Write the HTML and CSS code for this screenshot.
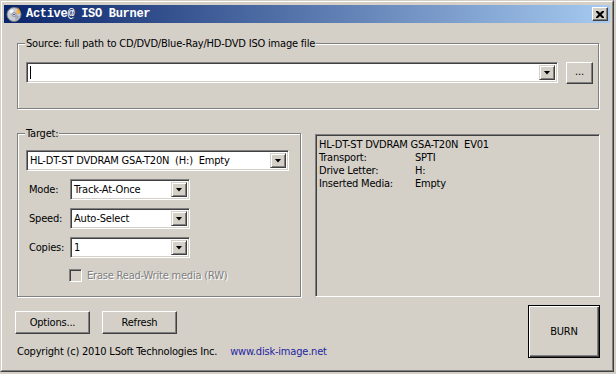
FILE: index.html
```html
<!DOCTYPE html>
<html>
	<head>
		<meta charset="utf-8" />
		<title>Active@ ISO Burner</title>
		<link rel="stylesheet" href="styles.css">
	</head>
	<body>
		<div class="window">
			<div class="frame">
				<!-- 标题栏 -->
				<div class="titlebar">
					<svg class="app-icon" width="16" height="16" viewBox="0 0 16 16">
						<circle cx="8" cy="8.5" r="7" fill="#c9ccd2" stroke="#7a7e88" stroke-width="1" />
						<path d="M3 6 A6 6 0 0 1 7 3 L7.6 6.4 A2.2 2.2 0 0 0 6 7.6 Z" fill="#f4f6fa" />
						<path d="M9.5 14 A6 6 0 0 0 13.6 10 L10.2 9.2 A2.2 2.2 0 0 1 9 10.6 Z" fill="#9fa6b4" />
						<circle cx="8" cy="8.5" r="2" fill="#e8e8ec" stroke="#7a7e88" stroke-width="0.8" />
						<circle cx="8" cy="8.5" r="0.8" fill="#0a246a" />
						<path d="M11 1 C13 2.5 14.5 4 13.8 6.5 C13.2 8 11.5 8.2 10.8 7.2 C10 6 10.8 5 11.4 4.2 C12 3.4 11.6 2.2 11 1 Z" fill="#f29a1e" />
						<path d="M11.8 4 C12.6 5 12.8 6 12.2 6.8 C11.7 7.2 11.2 6.8 11.3 6.2 C11.4 5.5 11.9 5 11.8 4 Z" fill="#ffe06a" />
					</svg>
					<span class="title">Active@ ISO Burner</span>
					<span class="close">
						<svg width="8" height="7" viewBox="0 0 8 7">
							<path d="M0 0h2l2 2 2-2h2v1l-2.5 2.5 2.5 2.5v1h-2l-2-2-2 2h-2v-1l2.5-2.5-2.5-2.5z" fill="#000" />
						</svg>
					</span>
				</div>

				<div class="client">
					<!-- 源文件 -->
					<div class="group source">
						<span class="caption">Source: full path to CD/DVD/Blue-Ray/HD-DVD ISO image file</span>
						<div class="source-row">
							<div class="combo combo-path">
								<span class="value"><i class="caret"></i></span>
								<span class="drop"><i class="arrow"></i></span>
							</div>
							<button class="btn btn-browse">...</button>
						</div>
					</div>

					<div class="middle">
						<!-- 目标设备 -->
						<div class="group target">
							<span class="caption">Target:</span>
							<div class="combo combo-drive">
								<span class="value">HL-DT-ST DVDRAM GSA-T20N&nbsp; (H:)&nbsp; Empty</span>
								<span class="drop"><i class="arrow"></i></span>
							</div>
							<div class="field">
								<span class="label">Mode:</span>
								<div class="combo combo-small">
									<span class="value">Track-At-Once</span>
									<span class="drop"><i class="arrow"></i></span>
								</div>
							</div>
							<div class="field">
								<span class="label">Speed:</span>
								<div class="combo combo-small">
									<span class="value">Auto-Select</span>
									<span class="drop"><i class="arrow"></i></span>
								</div>
							</div>
							<div class="field">
								<span class="label">Copies:</span>
								<div class="combo combo-small">
									<span class="value">1</span>
									<span class="drop"><i class="arrow"></i></span>
								</div>
							</div>
							<div class="check-row">
								<span class="checkbox"></span>
								<span class="disabled">Erase Read-Write media (RW)</span>
							</div>
						</div>

						<!-- 设备信息 -->
						<div class="info">
							<div class="info-head">HL-DT-ST DVDRAM GSA-T20N&nbsp; EV01</div>
							<div class="info-grid">
								<span>Transport:</span><span>SPTI</span>
								<span>Drive Letter:</span><span>H:</span>
								<span>Inserted Media:</span><span>Empty</span>
							</div>
						</div>
					</div>

					<div class="bottom">
						<div class="bottom-left">
							<div class="buttons">
								<button class="btn btn-wide">Options...</button>
								<button class="btn btn-wide">Refresh</button>
							</div>
							<p class="copyright">Copyright (c) 2010 LSoft Technologies Inc.<span class="link">www.disk-image.net</span></p>
						</div>
						<button class="btn btn-default">BURN</button>
					</div>
				</div>
			</div>
		</div>
	</body>
</html>
```
FILE: styles.css
```css
* {
	padding: 0;
	margin: 0;
	box-sizing: border-box;
}

body {
	background: #d4d0c8;
	font-family: "DejaVu Sans Condensed", "DejaVu Sans", sans-serif;
	font-size: 11px;
	letter-spacing: -0.2px;
	color: #000;
}

.window {
	width: 614px;
	height: 372px;
	border: 1px solid;
	border-color: #d4d0c8 #404040 #404040 #d4d0c8;
	background: #d4d0c8;
}

.frame {
	height: 100%;
	border: 1px solid;
	border-color: #fff #808080 #808080 #fff;
	padding: 2px;
}

/* 标题栏 */
.titlebar {
	height: 18px;
	margin-top: 1px;
	display: flex;
	align-items: center;
	padding: 0 2px;
	background: linear-gradient(to right, #0a246a, #a6caf0);
}

.app-icon {
	flex: none;
	margin-right: 4px;
}

.title {
	flex: 1;
	color: #fff;
	font-family: "Liberation Mono", monospace;
	font-weight: bold;
	font-size: 12px;
	letter-spacing: -0.3px;
}

.close {
	width: 16px;
	height: 14px;
	display: flex;
	align-items: center;
	justify-content: center;
	background: #d4d0c8;
	border: 1px solid;
	border-color: #fff #404040 #404040 #fff;
	box-shadow: inset -1px -1px #808080;
}

.client {
	padding: 20px 10px 0 13px;
}

/* 分组框 */
.group {
	position: relative;
	border: 1px solid #808080;
	box-shadow: inset 1px 1px #fff, 1px 1px #fff;
}

.caption {
	position: absolute;
	top: -7px;
	left: 7px;
	padding: 0 1px;
	line-height: 13px;
	background: #d4d0c8;
}

.source {
	width: 582px;
	height: 66px;
	padding: 18px 0 0 8px;
}

.source-row {
	display: flex;
	align-items: flex-start;
	gap: 8px;
}

/* 下拉框 */
.combo {
	display: flex;
	height: 21px;
	background: #fff;
	border: 1px solid;
	border-color: #808080 #fff #fff #808080;
	box-shadow: inset 1px 1px #404040, inset -1px -1px #d4d0c8;
	padding: 2px;
}

.combo .value {
	flex: 1;
	display: flex;
	align-items: center;
	padding-left: 1px;
	line-height: 15px;
	white-space: nowrap;
	overflow: hidden;
}

.caret {
	width: 1px;
	height: 13px;
	background: #000;
}

.drop {
	width: 16px;
	flex: none;
	display: flex;
	align-items: center;
	justify-content: center;
	background: #d4d0c8;
	border: 1px solid;
	border-color: #d4d0c8 #404040 #404040 #d4d0c8;
	box-shadow: inset 1px 1px #fff, inset -1px -1px #808080;
}

.arrow {
	display: block;
	width: 7px;
	height: 4px;
	background: #000;
	clip-path: polygon(0 0, 100% 0, 50% 100%);
}

.combo-path {
	width: 532px;
}

.combo-drive {
	width: 263px;
}

.combo-small {
	width: 120px;
}

/* 按钮 */
.btn {
	font: inherit;
	letter-spacing: inherit;
	color: #000;
	background: #d4d0c8;
	border: 1px solid;
	border-color: #fff #404040 #404040 #fff;
	box-shadow: inset -1px -1px #808080;
}

.btn-browse {
	width: 27px;
	height: 22px;
	padding-bottom: 3px;
}

.btn-wide {
	width: 75px;
	height: 23px;
}

.btn-default {
	width: 72px;
	height: 53px;
	margin-top: 8px;
	border: 1px solid #000;
	box-shadow: inset 1px 1px #fff, inset -1px -1px #404040, inset -2px -2px #808080;
}

/* 中间部分 */
.middle {
	display: flex;
	gap: 14px;
	margin-top: 24px;
}

.target {
	width: 284px;
	height: 164px;
	padding: 16px 0 0 8px;
}

.field {
	display: flex;
	align-items: center;
	margin-top: 8px;
}

.field .label {
	width: 44px;
	padding-left: 3px;
}

.check-row {
	display: flex;
	align-items: center;
	margin: 11px 0 0 43px;
}

.checkbox {
	width: 13px;
	height: 13px;
	margin-right: 5px;
	border: 1px solid;
	border-color: #808080 #fff #fff #808080;
	box-shadow: inset 1px 1px #404040, inset -1px -1px #d4d0c8;
}

.disabled {
	color: #808080;
	text-shadow: 1px 1px #fff;
}

.info {
	width: 285px;
	height: 163px;
	margin-top: 1px;
	padding: 3px 3px;
	border: 1px solid;
	border-color: #808080 #fff #fff #808080;
	box-shadow: inset 1px 1px #404040, inset -1px -1px #d4d0c8;
	line-height: 13px;
}

.info-grid {
	display: grid;
	grid-template-columns: 96px auto;
}

/* 底部 */
.bottom {
	display: flex;
	justify-content: space-between;
}

.bottom-left {
	margin-left: -2px;
	padding-top: 14px;
}

.buttons {
	display: flex;
	gap: 12px;
}

.copyright {
	margin: 11px 0 0 2px;
	line-height: 13px;
}

.link {
	margin-left: 13px;
	color: #1f1fa0;
}
```
